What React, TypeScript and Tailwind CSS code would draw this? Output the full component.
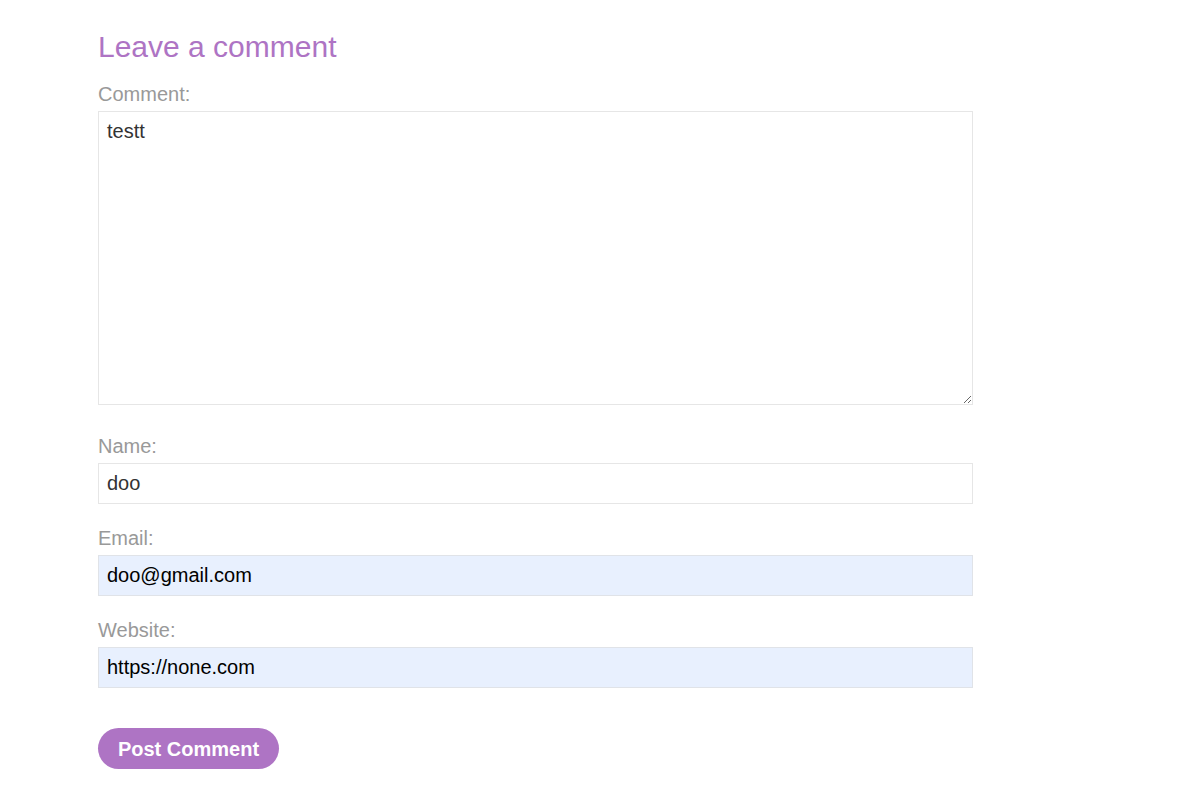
export default function App() {
  return (
    <div
      className="min-h-screen bg-white pl-[98px] pt-[30px]"
      style={{ fontFamily: '"Liberation Sans", Arial, sans-serif' }}
    >
      <form className="w-[875px]" onSubmit={(e) => e.preventDefault()}>
        <h2 className="text-[30px] leading-[34px] text-[#ae74c4]">Leave a comment</h2>

        <label className="mt-[19px] mb-[5px] block text-[20px] leading-[23px] text-[#999999]">Comment:</label>
        <textarea
          readOnly
          defaultValue="testt"
          className="block h-[294px] w-full border border-[#e6e6e6] bg-white px-2 pt-[8px] text-[20px] leading-[23px] text-[#333333] outline-none"
        />

        <label className="mt-[30px] mb-[5px] block text-[20px] leading-[23px] text-[#999999]">Name:</label>
        <input
          readOnly
          defaultValue="doo"
          className="block h-[41px] w-full border border-[#e6e6e6] bg-white px-2 text-[20px] text-[#333333] outline-none"
        />

        <label className="mt-[23px] mb-[5px] block text-[20px] leading-[23px] text-[#999999]">Email:</label>
        <input
          readOnly
          defaultValue="doo@gmail.com"
          className="block h-[41px] w-full border border-[#e0e3e8] bg-[#e8f0fe] px-2 text-[20px] text-black outline-none"
        />

        <label className="mt-[23px] mb-[5px] block text-[20px] leading-[23px] text-[#999999]">Website:</label>
        <input
          readOnly
          defaultValue="https://none.com"
          className="block h-[41px] w-full border border-[#e0e3e8] bg-[#e8f0fe] px-2 text-[20px] text-black outline-none"
        />

        <button
          type="submit"
          className="mt-[40px] h-[41px] w-[181px] rounded-full bg-[#ae74c4] text-[20px] font-bold text-white"
        >
          Post Comment
        </button>
      </form>
    </div>
  );
}
